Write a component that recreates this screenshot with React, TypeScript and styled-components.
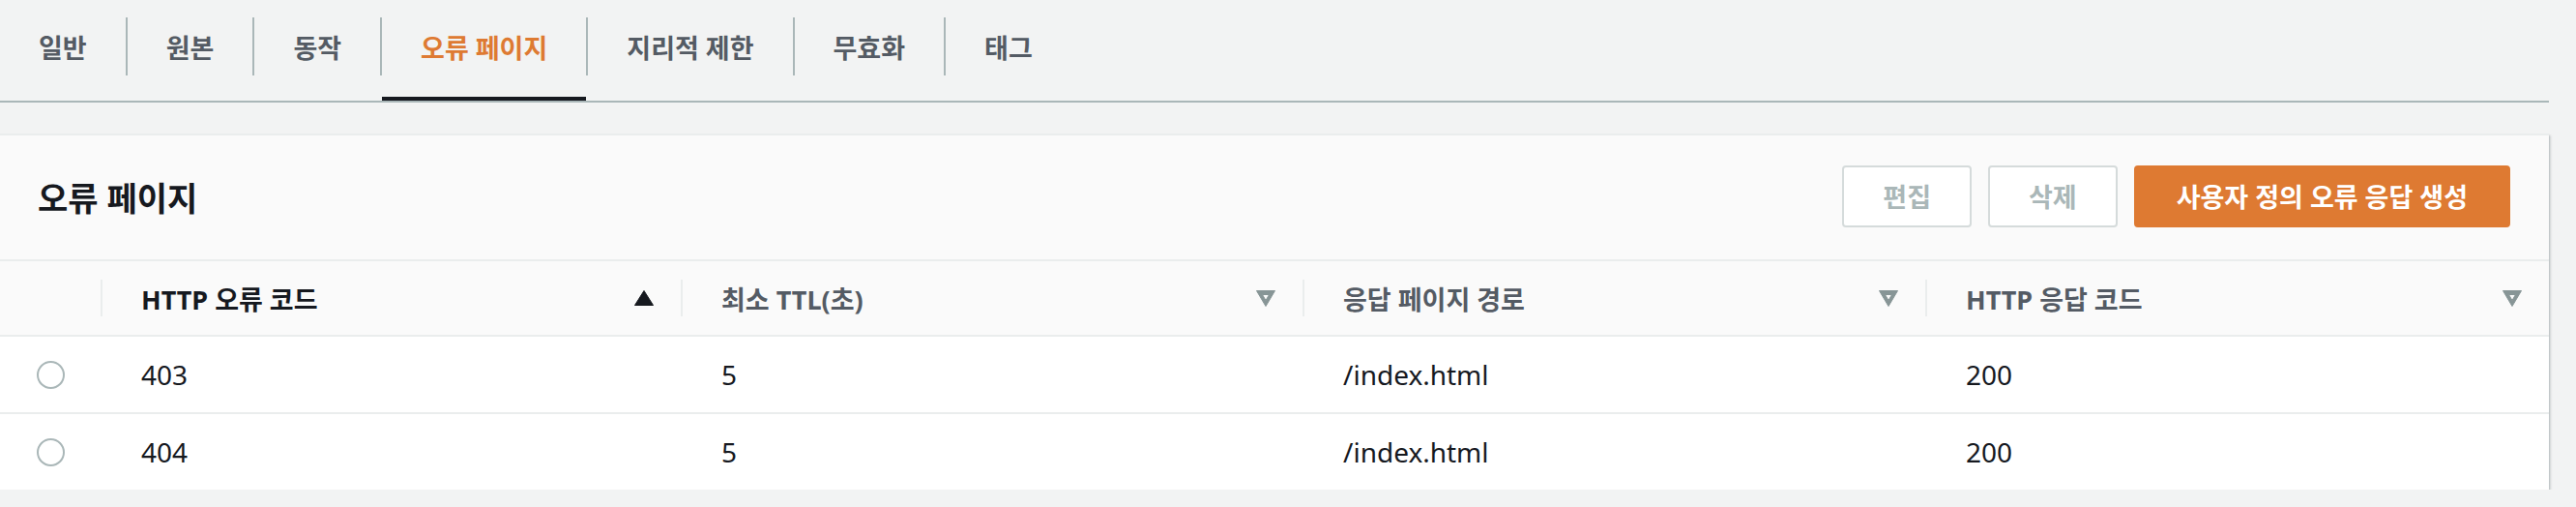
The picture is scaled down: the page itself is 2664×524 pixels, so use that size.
import React from "react";
import styled, { createGlobalStyle } from "styled-components";

const GlobalStyle = createGlobalStyle`
  html, body {
    margin: 0;
    padding: 0;
    background: #f2f3f3;
  }
  body {
    font-family: "Noto Sans", "Noto Sans CJK KR", sans-serif;
    color: #16191f;
  }
  * { box-sizing: border-box; }
`;

const ORANGE = "#de7a32";

const Page = styled.div`
  width: 2664px;
  padding-right: 28px;
`;

const TabBar = styled.div`
  display: flex;
  align-items: flex-start;
  height: 106px;
  border-bottom: 2px solid #aab7b8;
`;

const Tab = styled.div<{ $active?: boolean }>`
  height: 104px;
  padding: 0 40px 4px;
  display: flex;
  align-items: center;
  font-size: 27px;
  font-weight: 700;
  color: ${(p) => (p.$active ? ORANGE : "#545b64")};
  border-bottom: 4px solid ${(p) => (p.$active ? "#16191f" : "transparent")};
  white-space: nowrap;
`;

const TabDivider = styled.div`
  width: 2px;
  height: 60px;
  margin-top: 18px;
  background: #aab7b8;
  flex: none;
`;

const Card = styled.section`
  margin-top: 32px;
  border-top: 2px solid #eaeded;
  background: #ffffff;
  box-shadow: 0 2px 2px 0 rgba(0, 28, 36, 0.3), 2px 2px 2px 0 rgba(0, 28, 36, 0.12);
`;

const CardHeader = styled.div`
  height: 130px;
  display: flex;
  align-items: center;
  justify-content: space-between;
  padding: 0 40px 2px 39px;
  background: #fafafa;
  border-bottom: 2px solid #eaeded;
`;

const Title = styled.h2`
  margin: 0;
  font-size: 34px;
  font-weight: 700;
  color: #16191f;
`;

const Actions = styled.div`
  display: flex;
  gap: 17px;
`;

const Button = styled.button<{ $primary?: boolean }>`
  height: 64px;
  padding: 0 ${(p) => (p.$primary ? 42 : 40)}px 2px;
  border-radius: 4px;
  border: 2px solid ${(p) => (p.$primary ? ORANGE : "#d5dbdb")};
  background: ${(p) => (p.$primary ? ORANGE : "#ffffff")};
  color: ${(p) => (p.$primary ? "#ffffff" : "#aab7b8")};
  font-family: inherit;
  font-size: 27px;
  font-weight: 700;
  cursor: ${(p) => (p.disabled ? "default" : "pointer")};
`;

const Grid = styled.div`
  display: grid;
  grid-template-columns: 104px 600px 643px 644px 1fr;
`;

const HeaderRow = styled(Grid)`
  height: 78px;
  background: #fafafa;
  border-bottom: 2px solid #eaeded;
`;

const Row = styled(Grid)<{ $last?: boolean }>`
  height: ${(p) => (p.$last ? 78 : 80)}px;
  background: #ffffff;
  border-bottom: ${(p) => (p.$last ? "none" : "2px solid #eaeded")};
`;

const HeadCell = styled.div<{ $sorted?: boolean; $divider?: boolean }>`
  position: relative;
  display: flex;
  align-items: center;
  justify-content: space-between;
  padding: 0 28px 0 42px;
  font-size: 27px;
  font-weight: 700;
  color: ${(p) => (p.$sorted ? "#16191f" : "#545b64")};
  white-space: nowrap;

  &::before {
    content: "";
    display: ${(p) => (p.$divider ? "block" : "none")};
    position: absolute;
    left: 0;
    top: 19px;
    width: 2px;
    height: 38px;
    background: #eaeded;
  }
`;

const Cell = styled.div`
  display: flex;
  align-items: center;
  padding: 0 20px 0 42px;
  font-size: 28px;
  color: #16191f;
  white-space: nowrap;
`;

const RadioCell = styled.div`
  display: flex;
  align-items: center;
  justify-content: center;
`;

const Radio = styled.span`
  width: 29px;
  height: 29px;
  border-radius: 50%;
  border: 2.5px solid #aab7b8;
  background: #ffffff;
  margin-top: 1px;
`;

const SortAsc = () => (
  <svg width="20" height="16" viewBox="0 0 20 16" aria-hidden="true">
    <path d="M10 0.5 L19.5 15.5 L0.5 15.5 Z" fill="#16191f" stroke="#16191f" strokeWidth="1" strokeLinejoin="round" />
  </svg>
);

const SortNone = () => (
  <svg width="20" height="17" viewBox="0 0 20 17" aria-hidden="true">
    <path
      d="M0.5 0.5 L19.5 0.5 L10 16.5 Z M6.5 4.5 L13.5 4.5 L10 10.5 Z"
      fill="#879596"
      fillRule="evenodd"
      stroke="#879596"
      strokeWidth="1"
      strokeLinejoin="round"
    />
  </svg>
);

const tabs = ["일반", "원본", "동작", "오류 페이지", "지리적 제한", "무효화", "태그"];

const columns = [
  { label: "HTTP 오류 코드", sorted: true },
  { label: "최소 TTL(초)", sorted: false },
  { label: "응답 페이지 경로", sorted: false },
  { label: "HTTP 응답 코드", sorted: false },
];

const rows = [
  ["403", "5", "/index.html", "200"],
  ["404", "5", "/index.html", "200"],
];

export default function App() {
  return (
    <>
      <GlobalStyle />
      <Page>
        <TabBar>
          {tabs.map((t, i) => (
            <React.Fragment key={t}>
              {i > 0 && <TabDivider />}
              <Tab $active={t === "오류 페이지"}>{t}</Tab>
            </React.Fragment>
          ))}
        </TabBar>

        <Card>
          <CardHeader>
            <Title>오류 페이지</Title>
            <Actions>
              <Button disabled>편집</Button>
              <Button disabled>삭제</Button>
              <Button $primary>사용자 정의 오류 응답 생성</Button>
            </Actions>
          </CardHeader>

          <HeaderRow>
            <HeadCell />
            {columns.map((c) => (
              <HeadCell key={c.label} $sorted={c.sorted} $divider>
                <span>{c.label}</span>
                {c.sorted ? <SortAsc /> : <SortNone />}
              </HeadCell>
            ))}
          </HeaderRow>

          {rows.map((r, i) => (
            <Row key={r[0]} $last={i === rows.length - 1}>
              <RadioCell>
                <Radio />
              </RadioCell>
              {r.map((v, j) => (
                <Cell key={j}>{v}</Cell>
              ))}
            </Row>
          ))}
        </Card>
      </Page>
    </>
  );
}
